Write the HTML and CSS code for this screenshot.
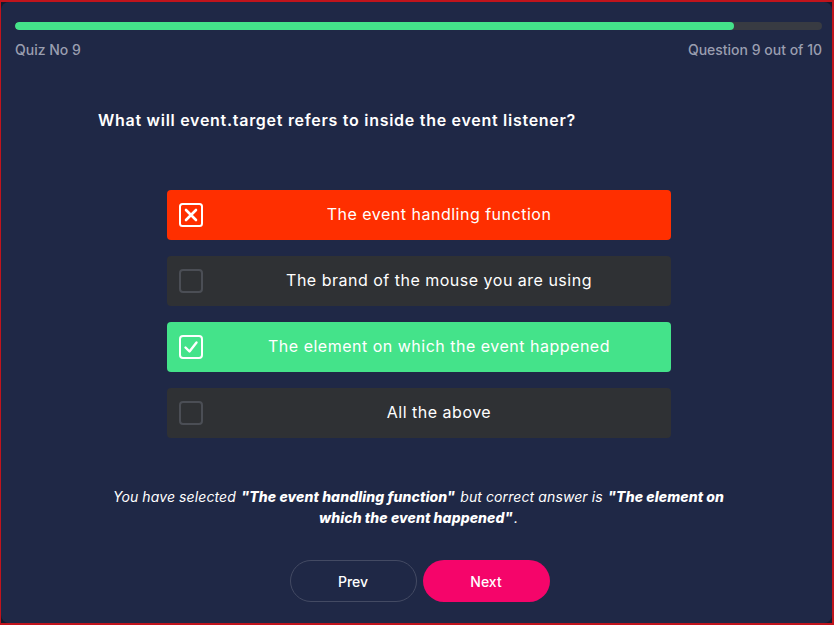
FILE: index.html
```html
<!DOCTYPE html>
<html lang="en">
<head>
<meta charset="utf-8">
<title>Quiz</title>
<link rel="stylesheet" href="styles.css">
</head>
<body>
<div class="frame">
  <div class="card">
    <div class="progress"><div class="progress-fill" style="width:89.1%"></div></div>
    <div class="meta">
      <span>Quiz No 9</span>
      <span>Question 9 out of 10</span>
    </div>
    <h1 class="question">What will event.target refers to inside the event listener?</h1>
    <ul class="options">
      <li class="option wrong">
        <span class="check">
          <svg viewBox="0 0 24 24" width="24" height="24"><rect x="1" y="1" width="22" height="22" rx="2.5" fill="none" stroke="#fff" stroke-width="2"/><path d="M7 7 L17 17 M17 7 L7 17" stroke="#fff" stroke-width="2.6" stroke-linecap="round"/></svg>
        </span>
        <span class="label">The event handling function</span>
      </li>
      <li class="option">
        <span class="check">
          <svg viewBox="0 0 24 24" width="24" height="24"><rect x="1" y="1" width="22" height="22" rx="3" fill="none" stroke="#4b4e55" stroke-width="2"/></svg>
        </span>
        <span class="label">The brand of the mouse you are using</span>
      </li>
      <li class="option right">
        <span class="check">
          <svg viewBox="0 0 24 24" width="24" height="24"><rect x="1" y="1" width="22" height="22" rx="3" fill="none" stroke="#fff" stroke-width="2"/><path d="M6.5 12.5 L10.5 16.5 L17.5 7.5" fill="none" stroke="#fff" stroke-width="2.4" stroke-linecap="round" stroke-linejoin="round"/></svg>
        </span>
        <span class="label">The element on which the event happened</span>
      </li>
      <li class="option">
        <span class="check">
          <svg viewBox="0 0 24 24" width="24" height="24"><rect x="1" y="1" width="22" height="22" rx="3" fill="none" stroke="#4b4e55" stroke-width="2"/></svg>
        </span>
        <span class="label">All the above</span>
      </li>
    </ul>
    <p class="feedback">You have selected <b>"The event handling function"</b> but correct answer is <b>"The element on which the event happened"</b>.</p>
    <div class="actions">
      <button class="btn prev">Prev</button>
      <button class="btn next">Next</button>
    </div>
  </div>
</div>
</body>
</html>
```
FILE: styles.css
```css
* { box-sizing: border-box; }
html, body { margin: 0; padding: 0; }
body {
  width: 834px;
  height: 625px;
  background: #141a2e;
  font-family: "Inter", "Noto Sans", sans-serif;
  overflow: hidden;
}
.frame {
  width: 834px;
  height: 625px;
  border: 1px solid #c0141c;
  border-top-width: 2px;
  border-right-width: 2px;
  border-bottom-width: 2px;
  background: #141a2e;
}
.card {
  height: 100%;
  background: #1f2846;
  border-radius: 8px;
  padding: 20px 10px 0 14px;
}
.progress {
  height: 8px;
  background: #383b42;
  border-radius: 4px;
  overflow: hidden;
}
.progress-fill {
  height: 100%;
  background: #44e38a;
  border-radius: 4px;
}
.meta {
  display: flex;
  justify-content: space-between;
  margin-top: 11px;
  font-size: 14px;
  color: #9a9eb0;
  font-weight: 500;
}
.question {
  margin: 52px 0 0 83px;
  font-size: 16px;
  font-weight: 600;
  color: #ffffff;
  letter-spacing: 0.72px;
}
.options {
  list-style: none;
  margin: 60px 0 0 152px;
  padding: 0;
  width: 504px;
  display: flex;
  flex-direction: column;
  gap: 16px;
}
.option {
  height: 50px;
  background: #2f3134;
  border-radius: 4px;
  display: flex;
  align-items: center;
  padding-left: 12px;
  padding-bottom: 3px;
  color: #ffffff;
  font-size: 16px;
  letter-spacing: 0.5px;
}
.option.wrong { background: #ff2f00; }
.option.right { background: #44e38a; }
.check {
  width: 24px;
  height: 24px;
  display: flex;
  flex: none;
  margin-top: 3px;
}
.label {
  flex: 1;
  text-align: center;
  padding-left: 4px;
}
.feedback {
  margin: 48px auto 0;
  width: 640px;
  text-align: center;
  font-style: italic;
  font-size: 14px;
  line-height: 21px;
  color: #ffffff;
  letter-spacing: 0.1px;
}
.feedback b { font-weight: 800; margin: 0 1px; }
.actions {
  display: flex;
  justify-content: center;
  gap: 6px;
  margin-top: 32px;
  padding-left: 2px;
}
.btn {
  width: 127px;
  height: 42px;
  border-radius: 21px;
  font-family: "Inter", "Noto Sans", sans-serif;
  font-size: 14px;
  font-weight: 500;
  color: #ffffff;
  cursor: pointer;
}
.prev {
  background: transparent;
  border: 1px solid #434a63;
}
.next {
  background: #f5056a;
  border: none;
}
```
